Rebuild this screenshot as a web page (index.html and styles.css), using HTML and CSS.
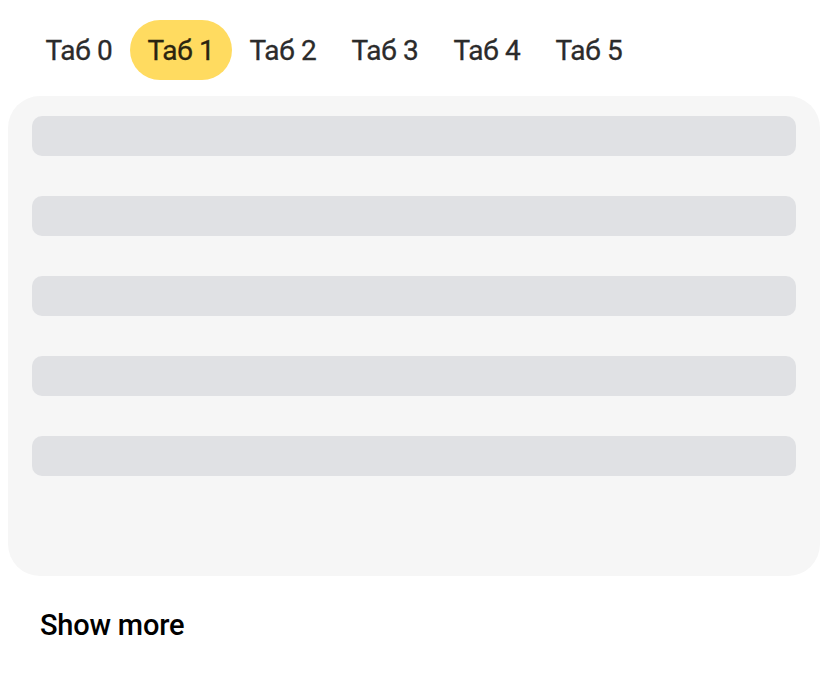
FILE: index.html
```html
<!DOCTYPE html>
<html lang="ru">
<head>
<meta charset="utf-8">
<title>Tabs</title>
<link rel="stylesheet" href="styles.css">
</head>
<body>
<div class="tabs">
  <div class="tab">Таб 0</div>
  <div class="tab tab-active">Таб 1</div>
  <div class="tab">Таб 2</div>
  <div class="tab">Таб 3</div>
  <div class="tab">Таб 4</div>
  <div class="tab">Таб 5</div>
</div>
<div class="card">
  <div class="bar"></div>
  <div class="bar"></div>
  <div class="bar"></div>
  <div class="bar"></div>
  <div class="bar"></div>
</div>
<div class="more">Show more</div>
</body>
</html>
```
FILE: styles.css
```css
html, body {
  background: #fff;
}
body {
  margin: 8px;
  font-family: Roboto, "Noto Sans", sans-serif;
  color: #333;
}
.tabs {
  display: flex;
  padding: 12px 20px 0;
}
.tab {
  height: 60px;
  width: 102px;
  box-sizing: border-box;
  display: flex;
  align-items: center;
  justify-content: center;
  font-size: 28px;
  letter-spacing: -0.3px;
  border-radius: 30px;
  color: #2b2b2b;
  -webkit-text-stroke: 0.3px #2b2b2b;
}
.tab-active {
  background: #ffdb60;
  color: #2a2410;
  -webkit-text-stroke: 0.3px #2a2410;
}
.card {
  margin-top: 16px;
  height: 480px;
  box-sizing: border-box;
  background: #f6f6f6;
  border-radius: 32px;
  padding: 20px 24px;
  display: flex;
  flex-direction: column;
  gap: 40px;
}
.bar {
  height: 40px;
  background: #e0e1e4;
  border-radius: 10px;
}
.more {
  margin-top: 29px;
  padding-left: 32px;
  font-size: 29px;
  line-height: 40px;
  font-weight: 500;
  color: #000;
  letter-spacing: -0.2px;
}
```
